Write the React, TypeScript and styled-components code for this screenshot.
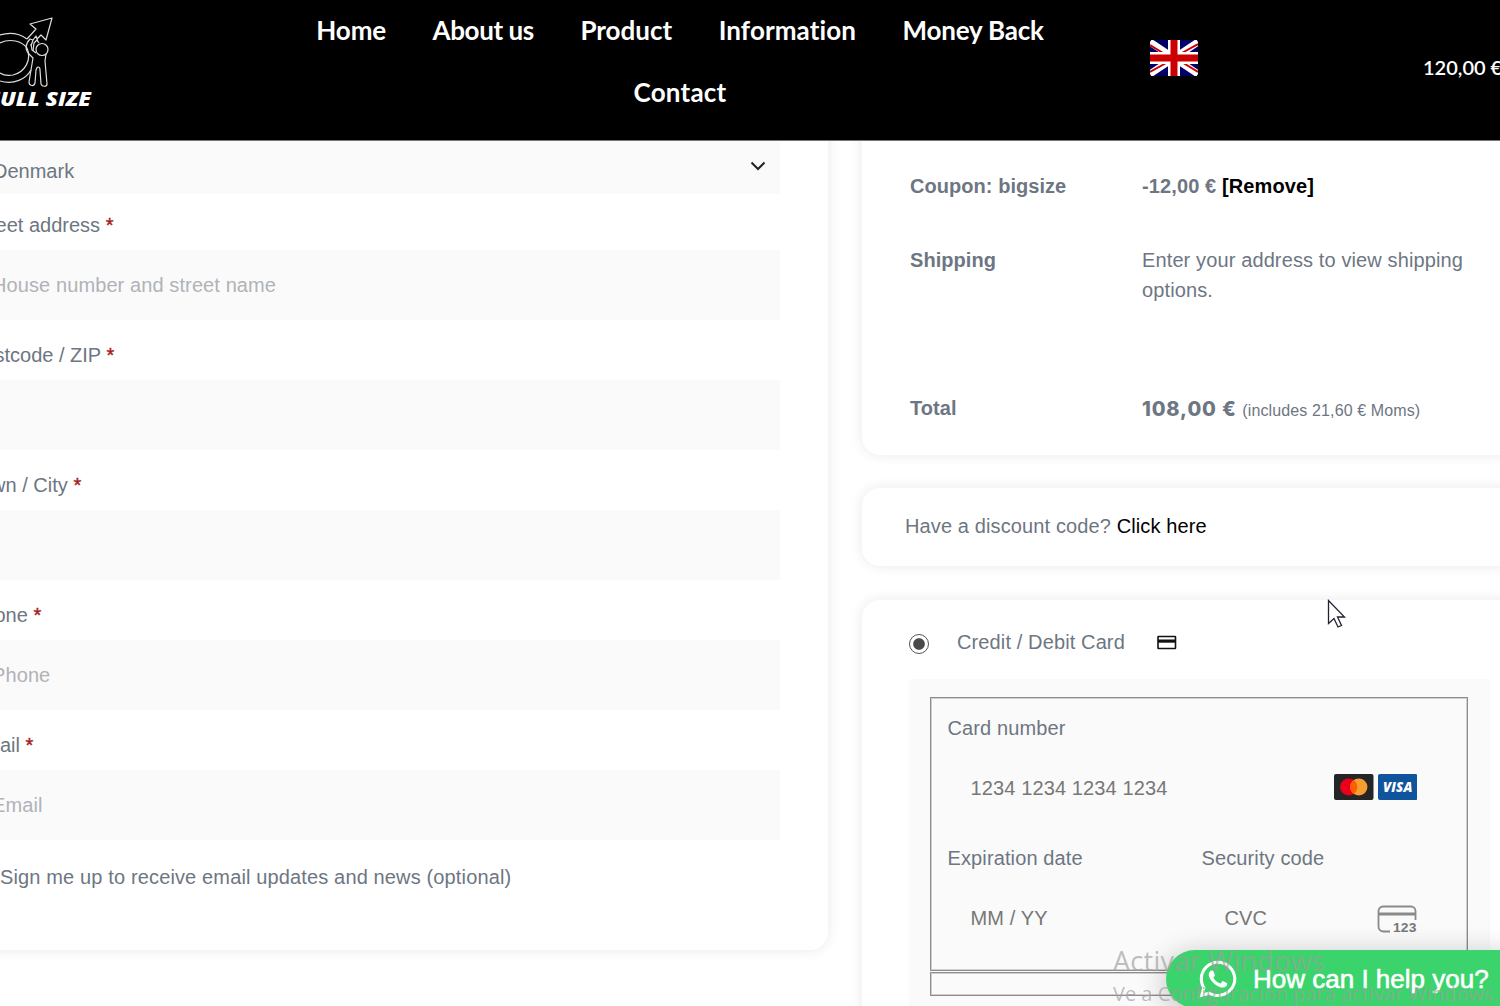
import React from "react";
import styled, { createGlobalStyle } from "styled-components";
import { FaWhatsapp } from "react-icons/fa";

const GlobalStyle = createGlobalStyle`
  * { box-sizing: border-box; }
  html, body { margin: 0; padding: 0; background: #fff; overflow: hidden; }
  body { font-family: "Liberation Sans", Arial, sans-serif; font-size: 20px; line-height: 30px; color: #6d7682; }
`;

const Page = styled.div`
  position: relative;
  width: 1500px;
  height: 1006px;
  overflow: hidden;
  display: flex;
  flex-direction: column;
`;

const Header = styled.header`
  flex: none;
  height: 141px;
  background: #000;
  border-bottom: 1px solid #777;
  color: #fff;
  display: grid;
  grid-template-columns: 300px 760px 90px 273px 120px;
  z-index: 1;
`;

const Logo = styled.svg`
  display: block;
  width: 100px;
  height: 96px;
  margin-top: 14px;
`;

const Nav = styled.nav`
  grid-column: 2;
  display: flex;
  flex-wrap: wrap;
  justify-content: center;
  align-content: flex-start;
  column-gap: 46.5px;
`;

const NavLink = styled.a<{ $track?: number }>`
  font: 700 26px/61px Lato, sans-serif;
  font-variant-ligatures: none;
  letter-spacing: ${(p) => p.$track ?? 0}px;
  white-space: nowrap;
  height: 62px;
`;

const Flag = styled.svg`
  grid-column: 4;
  display: block;
  width: 48px;
  height: 36px;
  margin-top: 40px;
`;

const CartTotal = styled.div`
  padding-top: 52px;
  font: 600 20px/30px Lato, sans-serif;
  white-space: nowrap;
`;

const Main = styled.main`
  flex: 1;
  display: grid;
  grid-template-columns: 828px 700px;
  column-gap: 34px;
  align-items: start;
  min-height: 0;
`;

const Card = styled.section`
  background: #fff;
  border-radius: 18px;
  box-shadow: 0 0 14px rgba(0, 0, 0, 0.09);
`;

const AddressCard = styled(Card)`
  margin: -40px 0 0 -76px;
  height: 849px;
  padding: 40px 48px 0 46px;
  display: flex;
  flex-direction: column;
`;

const Select = styled.div`
  flex: none;
  height: 53px;
  background: #fafafa;
  padding: 0 13px 0 23px;
  display: flex;
  justify-content: space-between;
`;

const SelectValue = styled.span`
  padding-top: 15px;
`;

const Chevron = styled.svg`
  width: 18px;
  height: 12px;
  margin-top: 19px;
`;

const FieldLabel = styled.label`
  flex: none;
  height: 60px;
  padding-top: 20px;
  white-space: nowrap;
  &:first-of-type { height: 56px; padding-top: 16px; }
`;

const Required = styled.span`
  color: #a61c1c;
  -webkit-text-stroke: 0.4px #a61c1c;
`;

const Input = styled.div`
  flex: none;
  height: 70px;
  background: #fafafa;
  color: #b0b3b8;
  padding: 20px 22px;
  letter-spacing: 0.1px;
  &:first-of-type { padding-top: 19px; }
`;

const OptIn = styled.div`
  padding: 22px 0 0 30px;
  letter-spacing: 0.14px;
`;

const Side = styled.div`
  display: flex;
  flex-direction: column;
  letter-spacing: 0.12px;
`;

const TotalsCard = styled(Card)`
  margin-top: -40px;
  height: 354px;
  padding: 70px 0 0 48px;
`;

const TotalsRow = styled.div<{ $height: number }>`
  height: ${(p) => p.$height}px;
  display: grid;
  grid-template-columns: 232px 350px;
`;

const RowName = styled.div`
  font-weight: 700;
  letter-spacing: 0.05px;
`;

const RowValue = styled.div<{ $bold?: boolean }>`
  font-weight: ${(p) => (p.$bold ? 700 : 400)};
`;

const DarkLink = styled.a`
  color: #000;
`;

const Amount = styled.strong`
  font: 800 20px/32px Inter, "Open Sans", sans-serif;
  letter-spacing: 0.85px;
`;

const TaxNote = styled.small`
  font-size: 16px;
  letter-spacing: 0.12px;
`;

const DiscountCard = styled(Card)`
  margin-top: 33px;
  height: 78px;
  padding: 23px 43px;
`;

const PaymentCard = styled(Card)`
  margin-top: 34px;
  height: 500px;
  padding: 27px 0 0 47px;
`;

const Method = styled.div`
  display: flex;
  align-items: center;
  height: 30px;
`;

const Radio = styled.span`
  width: 20px;
  height: 20px;
  margin: 3px 28px 0 0;
  border: 1.5px solid #555;
  border-radius: 50%;
  background: radial-gradient(circle, #4a4a4a 5.3px, #fff 6.3px);
`;

const MethodIcon = styled.svg`
  width: 20px;
  height: 15px;
  margin-left: 32px;
`;

const PaymentBox = styled.div`
  width: 581px;
  height: 400px;
  margin-top: 22px;
  background: #fafafa;
  padding: 18px 22px 0 21px;
  border-radius: 3px;
`;

const Fieldset = styled.div<{ $height: number }>`
  height: ${(p) => p.$height}px;
  border: 1px solid #8c8c8c;
  box-shadow: inset 0 0 0 1px #cfcfcf;
  margin-bottom: 1px;
  padding: 15px 50px 0 16.5px;
`;

const CardGrid = styled.div`
  display: grid;
  grid-template-columns: 254px 1fr;
`;

const CardField = styled.div<{ $wide?: boolean }>`
  grid-column: ${(p) => (p.$wide ? "1 / -1" : "auto")};
  height: 130px;
`;

const CardInput = styled.div`
  height: 70px;
  margin-top: 16px;
  padding-left: 23px;
  display: flex;
  align-items: flex-start;
  justify-content: space-between;
  padding-top: 15px;
  color: #777;
`;

const FieldValue = styled.span`
  margin-top: -1px;
`;

const Brands = styled.div`
  display: flex;
  gap: 4px;
`;

const BrandIcon = styled.svg`
  display: block;
  width: 39.5px;
  height: 26px;
`;

const CvcIcon = styled.svg`
  display: block;
  width: 40px;
  height: 29px;
  margin-top: 1px;
`;

const ChatButton = styled.div`
  position: absolute;
  left: 1166px;
  top: 950px;
  width: 370px;
  height: 58px;
  border-radius: 29px;
  background: #3bd36c;
  box-shadow: 1px 6px 24px 7px rgba(0, 0, 0, 0.16);
  color: #fff;
  display: flex;
  align-items: center;
  padding-left: 31px;
  gap: 14px;
  font-size: 26px;
  -webkit-text-stroke: 0.6px #fff;
  white-space: nowrap;
  z-index: 2;
`;

const Watermark = styled.div`
  position: absolute;
  left: 1113px;
  top: 943px;
  z-index: 3;
  color: rgba(158, 158, 158, 0.68);
  font-family: "Open Sans", sans-serif;
  white-space: nowrap;
`;

const WatermarkTitle = styled.div`
  font-size: 27px;
  line-height: 36px;
  letter-spacing: 0.25px;
`;

const WatermarkText = styled.div`
  font-size: 20px;
  line-height: 30px;
`;

const Pointer = styled.svg`
  position: absolute;
  left: 1327px;
  top: 599px;
  width: 20px;
  height: 30px;
  z-index: 3;
`;

const fields = [
  { label: "Street address", placeholder: "House number and street name" },
  { label: "Postcode / ZIP", placeholder: "" },
  { label: "Town / City", placeholder: "" },
  { label: "Phone", placeholder: "Phone" },
  { label: "Email", placeholder: "Email" },
];

export default function App() {
  return (
    <Page>
      <GlobalStyle />
      <Header>
        <Logo viewBox="0 0 100 96">
          <g fill="none" stroke="#ddd" strokeWidth="1.2" strokeLinejoin="round">
            <path d="M0 21C10 18 20 20 27 25M0 67c14 4 26-2 31-11" />
            <path d="M0 29C10 24 22 27 27 34c5 12-2 24-14 27-5 1-10 0-13-2" />
            <path d="M27 25l9-10-6-5 22-6-6 22-5-5-4 4M31 32l2-6 3-4 2 6M33 37l1-8 3-3 2 3" />
            <circle cx="42" cy="35.500" r="6" />
            <path d="M33 26l-3-1c-5 5-5 11-1 15l4 4-4 24c0 4 5 5 6 1l1-13c1-4 4-4 4 0l1 14c1 3 6 3 6 0l-2-23 1-7M31 30l1 6 4 3" />
          </g>
          <text x="-13" y="92" textLength="104" lengthAdjust="spacingAndGlyphs" fill="#fff" fontFamily="Open Sans" fontWeight="800" fontStyle="italic" fontSize="19.500">FULL SIZE</text>
        </Logo>
        <Nav>
          <NavLink $track={-0.1}>Home</NavLink>
          <NavLink $track={-0.4}>About us</NavLink>
          <NavLink>Product</NavLink>
          <NavLink $track={0.1}>Information</NavLink>
          <NavLink $track={-0.2}>Money Back</NavLink>
          <NavLink $track={0.2}>Contact</NavLink>
        </Nav>
        <Flag viewBox="0 0 48 36">
          <path d="M0 0h48v36H0z" fill="#006" />
          <path d="M0 2L48 34M48 2L0 34" stroke="#fff" strokeWidth="7" />
          <path d="M0 5l18 11M48 4L30 14M0 32l18-10M48 32L30 21" stroke="#c00" strokeWidth="2" />
          <path d="M24 0v36M0 18h48" stroke="#fff" strokeWidth="12" />
          <path d="M24 0v36M0 18h48" stroke="#c00" strokeWidth="7" />
        </Flag>
        <CartTotal>120,00 €</CartTotal>
      </Header>

      <Main>
        <AddressCard>
          <Select>
            <SelectValue>Denmark</SelectValue>
            <Chevron viewBox="0 0 18 12" fill="none" stroke="#222" strokeWidth="2">
              <path d="M2.5 2.5L9 9l6.500-6.500" />
            </Chevron>
          </Select>
          {fields.map((f) => (
            <React.Fragment key={f.label}>
              <FieldLabel>
                {f.label} <Required>*</Required>
              </FieldLabel>
              <Input>{f.placeholder}</Input>
            </React.Fragment>
          ))}
          <OptIn>Sign me up to receive email updates and news (optional)</OptIn>
        </AddressCard>

        <Side>
          <TotalsCard>
            <TotalsRow $height={74}>
              <RowName>Coupon: bigsize</RowName>
              <RowValue $bold>
                -12,00 € <DarkLink>[Remove]</DarkLink>
              </RowValue>
            </TotalsRow>
            <TotalsRow $height={148}>
              <RowName>Shipping</RowName>
              <RowValue>Enter your address to view shipping options.</RowValue>
            </TotalsRow>
            <TotalsRow $height={40}>
              <RowName>Total</RowName>
              <RowValue>
                <Amount>108,00 €</Amount> <TaxNote>(includes 21,60 € Moms)</TaxNote>
              </RowValue>
            </TotalsRow>
          </TotalsCard>

          <DiscountCard>
            Have a discount code? <DarkLink>Click here</DarkLink>
          </DiscountCard>

          <PaymentCard>
            <Method>
              <Radio />
              Credit / Debit Card
              <MethodIcon viewBox="0 0 20 15">
                <rect x="1" y="1.500" width="17.500" height="12" rx="0.5" fill="none" stroke="#111" strokeWidth="1.600" />
                <path d="M1 4.500h17.500v3.200H1z" fill="#111" />
              </MethodIcon>
            </Method>
            <PaymentBox>
              <Fieldset $height={274}>
                <CardGrid>
                  <CardField $wide>
                    Card number
                    <CardInput>
                      <FieldValue>1234 1234 1234 1234</FieldValue>
                      <Brands>
                        <BrandIcon viewBox="0 0 39 26" preserveAspectRatio="none">
                          <rect width="39" height="26" rx="2" fill="#252525" />
                          <circle cx="14.500" cy="13" r="8.500" fill="#eb001b" />
                          <circle cx="24.500" cy="13" r="8.500" fill="#f79e31" />
                          <path d="M19.500 6.100a8.500 8.500 0 010 13.800 8.500 8.500 0 010-13.800z" fill="#ff5f00" />
                        </BrandIcon>
                        <BrandIcon viewBox="0 0 39 26" preserveAspectRatio="none">
                          <rect width="39" height="26" rx="2" fill="#10549d" />
                          <text x="5" y="18.200" textLength="29" lengthAdjust="spacingAndGlyphs" fill="#fff" fontFamily="Open Sans" fontWeight="800" fontStyle="italic" fontSize="14">VISA</text>
                        </BrandIcon>
                      </Brands>
                    </CardInput>
                  </CardField>
                  <CardField>
                    Expiration date
                    <CardInput>
                      <FieldValue>MM / YY</FieldValue>
                    </CardInput>
                  </CardField>
                  <CardField>
                    Security code
                    <CardInput>
                      <FieldValue>CVC</FieldValue>
                      <CvcIcon viewBox="0 0 40 29">
                        <path d="M13 26.500H6.500a5 5 0 01-5-5V6a4.500 4.500 0 014.500-4.500h28A4.500 4.500 0 0138.500 6v9" fill="none" stroke="#8a8a8a" strokeWidth="1.800" />
                        <path d="M1.500 9h37" stroke="#8a8a8a" strokeWidth="3" />
                        <text x="16" y="27" textLength="23.500" lengthAdjust="spacingAndGlyphs" fill="#777" fontFamily="Liberation Sans" fontWeight="700" fontSize="13.500">123</text>
                      </CvcIcon>
                    </CardInput>
                  </CardField>
                </CardGrid>
              </Fieldset>
              <Fieldset $height={24} />
            </PaymentBox>
          </PaymentCard>
        </Side>
      </Main>

      <ChatButton>
        <FaWhatsapp size={42} />
        How can I help you?
      </ChatButton>
      <Watermark>
        <WatermarkTitle>Activar Windows</WatermarkTitle>
        <WatermarkText>Ve a Configuración para activar Windows.</WatermarkText>
      </Watermark>
      <Pointer viewBox="0 0 20 30">
        <path d="M1.500 1.500v23l5.500-5 4 8.500 3.500-1.500-4-8.500h7z" fill="#fff" stroke="#223" strokeWidth="1.300" />
      </Pointer>
    </Page>
  );
}
